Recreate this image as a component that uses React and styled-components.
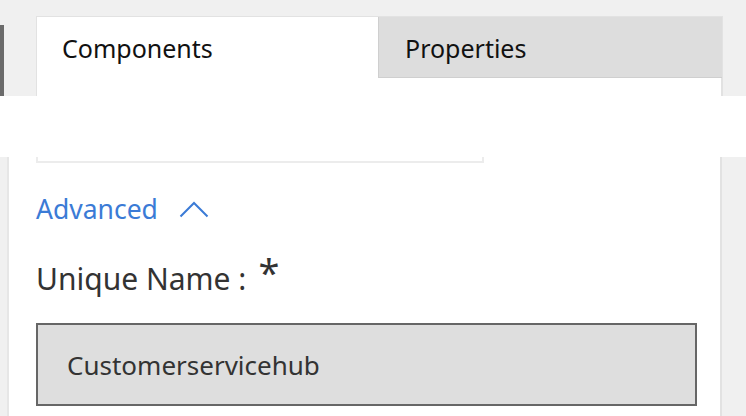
import styled, { createGlobalStyle } from 'styled-components';

const Global = createGlobalStyle`
  html, body { margin: 0; padding: 0; }
  body {
    background: #f0f0f0;
    font-family: "Noto Sans", "Open Sans", sans-serif;
    color: #1a1a1a;
  }
`;

const Page = styled.div`
  width: 746px;
  height: 416px;
  overflow: hidden;
  display: flex;
  flex-direction: column;
`;

const Top = styled.div`
  height: 96px;
  display: flex;
`;

const Rail = styled.div`
  width: 36px;
  padding-top: 25px;
  box-sizing: border-box;

  span {
    display: block;
    width: 4px;
    height: 71px;
    background: #6b6b6b;
  }
`;

const TabPanel = styled.div`
  margin-top: 16px;
  width: 687px;
  border-top: 1px solid #e2e2e2;
  border-left: 1px solid #e2e2e2;
  display: flex;
  align-items: flex-start;
  background: #fff;
  box-sizing: border-box;
  height: 80px;
  border-right: 2px solid #e2e2e2;
`;

const Tab = styled.div`
  box-sizing: border-box;
  height: ${p => (p.$active ? '79px' : '61px')};
  width: ${p => (p.$active ? '341px' : '344px')};
  padding-left: ${p => (p.$active ? '25px' : '26px')};
  padding-top: 15px;
  font-size: 25px;
  line-height: 32px;
  color: #111;
  background: ${p => (p.$active ? '#fff' : '#dddddd')};
  border-left: ${p => (p.$active ? 'none' : '1px solid #cfcfcf')};
  border-bottom: ${p => (p.$active ? 'none' : '1px solid #cfcfcf')};
  margin-right: ${p => (p.$active ? '0' : '-2px')};
  white-space: nowrap;
`;

const Band = styled.div`
  height: 61px;
  background: #fff;
`;

const Bottom = styled.div`
  flex: 1;
  display: flex;
`;

const Gutter = styled.div`
  width: 7px;
  border-right: 2px solid #e6e6e6;
`;

const Content = styled.div`
  width: 713px;
  background: #fff;
  border-right: 2px solid #e2e2e2;
  padding-left: 27px;
  box-sizing: border-box;
  display: flex;
  flex-direction: column;
`;

const FieldStub = styled.div`
  width: 448px;
  height: 6px;
  box-sizing: border-box;
  border: 2px solid #ececec;
  border-top: none;
`;

const Toggle = styled.div`
  margin-top: 29px;
  display: flex;
  align-items: center;
  gap: 21px;
  color: #3b7bd6;
  font-size: 26.5px;
  line-height: 34px;
`;

const Label = styled.div`
  margin-top: 26px;
  font-size: 30px;
  line-height: 40px;
  color: #333;

  b {
    font-weight: normal;
    font-size: 38px;
    margin-left: 12px;
    vertical-align: 3px;
  }
`;

const ReadOnlyInput = styled.div`
  margin-top: 24px;
  width: 661px;
  height: 83px;
  box-sizing: border-box;
  border: 2px solid #666;
  background: #dedede;
  padding-left: 29px;
  display: flex;
  align-items: center;
  font-size: 26px;
  color: #333;
`;

export default function App() {
  return (
    <Page>
      <Global />
      <Top>
        <Rail><span /></Rail>
        <TabPanel>
          <Tab $active>Components</Tab>
          <Tab>Properties</Tab>
        </TabPanel>
      </Top>
      <Band />
      <Bottom>
        <Gutter />
        <Content>
          <FieldStub />
          <Toggle>
            Advanced
            <svg width="30" height="18" viewBox="0 0 30 18" fill="none">
              <path d="M1.5 16.5 L15 3 L28.5 16.5" stroke="#3b7bd6" strokeWidth="2" />
            </svg>
          </Toggle>
          <Label>Unique Name :<b>*</b></Label>
          <ReadOnlyInput>Customerservicehub</ReadOnlyInput>
        </Content>
      </Bottom>
    </Page>
  );
}
